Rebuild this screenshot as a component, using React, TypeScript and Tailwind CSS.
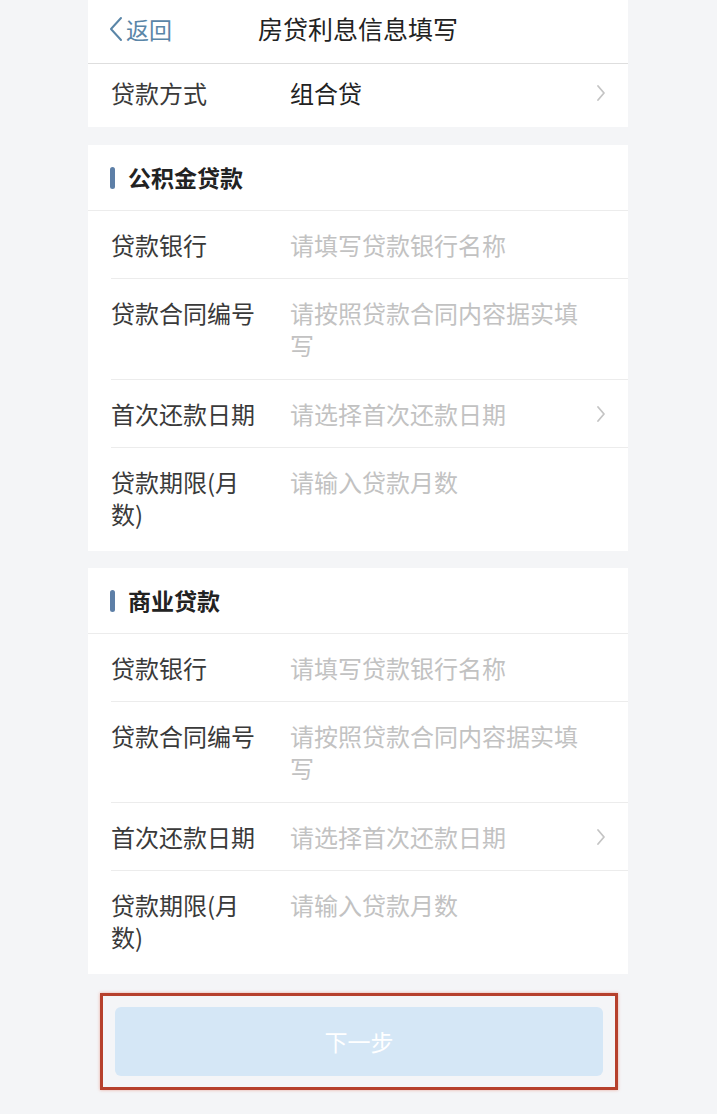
import React from "react";

const FONT = { fontFamily: '"Noto Sans CJK SC", "Noto Sans", sans-serif' };

function Chevron() {
  return (
    <svg width="12" height="18" viewBox="0 0 12 18" fill="none">
      <polyline points="3,2 9,9 3,16" stroke="#c4c4c4" strokeWidth="1.8" strokeLinecap="round" strokeLinejoin="round" />
    </svg>
  );
}

type Field = { label: string; placeholder: string; arrow?: boolean; pad: string };

function Row({ label, placeholder, arrow, pad, last }: Field & { last?: boolean }) {
  return (
    <div className="flex pl-[23px]">
      <div className={`flex flex-1 items-start pt-[18px] ${pad} ${last ? "" : "border-b border-[#ececec]"}`}>
        <div className="w-[148px] shrink-0 text-[24px] leading-[32px] text-[#3a3a3a]">{label}</div>
        <div className="ml-[31px] flex-1 text-[24px] leading-[32px] text-[#c2c2c2]">{placeholder}</div>
        <div className="flex h-[32px] w-[38px] shrink-0 items-center pl-[5px]">{arrow ? <Chevron /> : null}</div>
      </div>
    </div>
  );
}

function Section({ title, fields }: { title: string; fields: Field[] }) {
  return (
    <div className="bg-white">
      <div className="flex h-[66px] items-center border-b border-[#ececec] pl-[22px]">
        <span className="mr-[13px] h-[22px] w-[5px] rounded-full bg-[#5d7fa7]" />
        <span className="text-[23px] font-bold text-[#222]">{title}</span>
      </div>
      {fields.map((f, i) => (
        <Row key={f.label + i} {...f} last={i === fields.length - 1} />
      ))}
    </div>
  );
}

const fields: Field[] = [
  { label: "贷款银行", placeholder: "请填写贷款银行名称", pad: "pb-[17px]" },
  { label: "贷款合同编号", placeholder: "请按照贷款合同内容据实填写", pad: "pb-[18px]" },
  { label: "首次还款日期", placeholder: "请选择首次还款日期", arrow: true, pad: "pb-[17px]" },
  { label: "贷款期限(月数)", placeholder: "请输入贷款月数", pad: "pb-[21px]" },
];

export default function App() {
  return (
    <div className="min-h-[1114px] w-[717px] bg-[#f4f5f7]" style={FONT}>
      <div className="ml-[88px] w-[540px]">
        {/* top bar */}
        <div className="relative flex h-[64px] items-center justify-center border-b border-[#dedede] bg-white pb-[6px]">
          <div className="absolute left-[20px] top-0 flex h-[58px] items-center text-[#5a86a8]">
            <svg width="16" height="26" viewBox="0 0 16 26" fill="none" className="mr-[2px]">
              <polyline points="13,2 3,13 13,24" stroke="#5a86a8" strokeWidth="2" strokeLinecap="round" strokeLinejoin="round" />
            </svg>
            <span className="text-[23px]">返回</span>
          </div>
          <span className="text-[25px] text-[#222]">房贷利息信息填写</span>
        </div>

        {/* loan type */}
        <div className="flex h-[63px] items-center bg-white pb-[5px] pl-[23px]">
          <div className="w-[148px] shrink-0 text-[24px] text-[#3a3a3a]">贷款方式</div>
          <div className="ml-[31px] flex-1 text-[24px] text-[#222]">组合贷</div>
          <div className="flex w-[38px] shrink-0 items-center pl-[5px]">
            <Chevron />
          </div>
        </div>

        <div className="mt-[18px]">
          <Section title="公积金贷款" fields={fields} />
        </div>
        <div className="mt-[17px]">
          <Section title="商业贷款" fields={fields} />
        </div>

        {/* next step */}
        <div className="mt-[19px] ml-[12px] w-[518px] border-[3px] border-[#b6402c] px-[12px] py-[11px] shadow-[0_0_3px_rgba(230,120,100,0.6)]">
          <button className="flex h-[69px] w-full items-center justify-center rounded-[6px] bg-[#d5e7f6] text-[23px] text-white">
            下一步
          </button>
        </div>
      </div>
    </div>
  );
}
